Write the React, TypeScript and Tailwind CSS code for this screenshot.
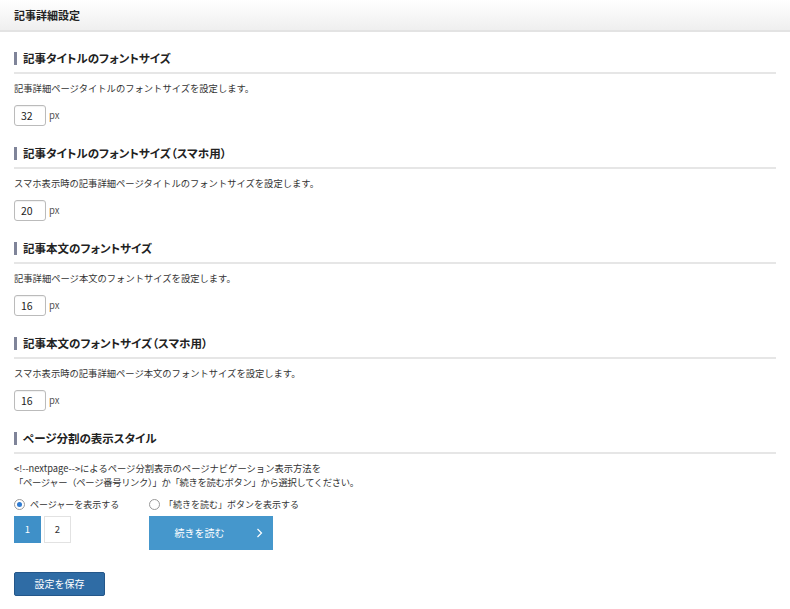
import React from 'react';

const font = { fontFamily: '"Noto Sans CJK JP", "Noto Sans", sans-serif' };

interface SizeSectionProps {
  title: string;
  description: string;
  value: string;
}

const SectionHeading: React.FC<{ title: string }> = ({ title }) => (
  <div className="border-b-2 border-[#e6e6e6] pb-[7px]">
    <h3 className="flex h-[13px] items-center border-l-[3px] border-[#7f8499] pl-[6px] text-[11.5px] leading-[13px] font-bold text-[#222] [font-feature-settings:'palt']">
      {title}
    </h3>
  </div>
);

const SizeSection: React.FC<SizeSectionProps> = ({ title, description, value }) => (
  <section className="mb-[21px]">
    <SectionHeading title={title} />
    <p className="mt-[8px] text-[9.3px] leading-[12px] text-[#333]">{description}</p>
    <div className="mt-[11px] flex items-center gap-[3px]">
      <div className="flex h-[21px] w-[32px] items-center rounded-[3px] border border-[#bbb] pl-[6px] text-[10.5px] text-[#222] shadow-[inset_0_1px_1px_rgba(0,0,0,0.06)]">
        {value}
      </div>
      <span className="text-[9.5px] text-[#555]">px</span>
    </div>
  </section>
);

const sections: SizeSectionProps[] = [
  {
    title: '記事タイトルのフォントサイズ',
    description: '記事詳細ページタイトルのフォントサイズを設定します。',
    value: '32',
  },
  {
    title: '記事タイトルのフォントサイズ（スマホ用）',
    description: 'スマホ表示時の記事詳細ページタイトルのフォントサイズを設定します。',
    value: '20',
  },
  {
    title: '記事本文のフォントサイズ',
    description: '記事詳細ページ本文のフォントサイズを設定します。',
    value: '16',
  },
  {
    title: '記事本文のフォントサイズ（スマホ用）',
    description: 'スマホ表示時の記事詳細ページ本文のフォントサイズを設定します。',
    value: '16',
  },
];

export default function App() {
  return (
    <div className="min-h-[609px] w-[790px] bg-white" style={font}>
      <header className="flex h-[32px] items-center border-b-2 border-[#e3e3e3] bg-gradient-to-b from-white to-[#efefef] px-[14px]">
        <h2 className="text-[11px] font-bold text-[#222]">記事詳細設定</h2>
      </header>

      <div className="pt-[20px] pr-[14px] pl-[14px]">
        {sections.map((s, i) => (
          <SizeSection key={i} {...s} />
        ))}

        <section>
          <SectionHeading title="ページ分割の表示スタイル" />
          <p className="mt-[7px] text-[9.3px] leading-[14px] text-[#333]">
            &lt;!--nextpage--&gt;によるページ分割表示のページナビゲーション表示方法を
            <br />
            <span className="tracking-[-0.3px]">
              「ページャー（ページ番号リンク）」か「続きを読むボタン」から選択してください。
            </span>
          </p>

          <div className="mt-[9px] flex">
            <div className="w-[135px]">
              <label className="flex items-center gap-[5px] text-[9px] text-[#333]">
                <span className="flex h-[11px] w-[11px] items-center justify-center rounded-full border border-[#999] bg-white">
                  <span className="h-[5px] w-[5px] rounded-full bg-[#2f7bd1]" />
                </span>
                ページャーを表示する
              </label>
              <div className="mt-[4px] flex gap-[3px]">
                <div className="flex h-[27px] w-[27px] items-center justify-center bg-[#3f90c8] text-[9.5px] text-white">
                  1
                </div>
                <div className="flex h-[27px] w-[27px] items-center justify-center border border-[#e2e2e2] bg-white text-[9.5px] text-[#333]">
                  2
                </div>
              </div>
            </div>

            <div>
              <label className="flex items-center gap-[4px] text-[9px] text-[#333]">
                <span className="h-[11px] w-[11px] rounded-full border border-[#999] bg-white" />
                「続きを読む」ボタンを表示する
              </label>
              <div className="mt-[4px] flex h-[34px] w-[124px] items-center bg-[#4597cc] text-[10px] text-white">
                <span className="flex-1 pl-[12px] text-center">続きを読む</span>
                <svg width="7" height="10" viewBox="0 0 7 10" className="mr-[10px] ml-[18px]">
                  <path d="M1.5 1 L5.5 5 L1.5 9" fill="none" stroke="white" strokeWidth="1.2" />
                </svg>
              </div>
            </div>
          </div>
        </section>

        <button className="mt-[22px] flex h-[24px] w-[91px] items-center justify-center rounded-[2px] border border-[#24578a] bg-[#2f6ca5] text-[10px] text-white">
          設定を保存
        </button>
      </div>
    </div>
  );
}
